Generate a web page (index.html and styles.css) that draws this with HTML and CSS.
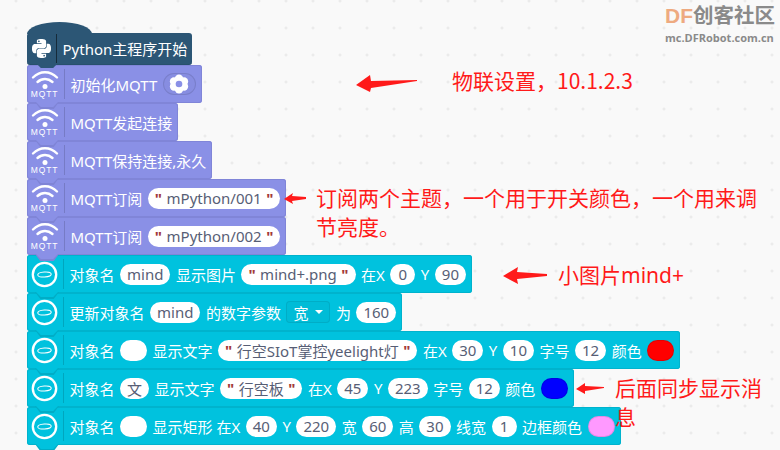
FILE: index.html

```html
<!DOCTYPE html>
<html lang="en">
<head>
  <meta charset="UTF-8" />
  <title>MQTT blocks</title>
  <link rel="stylesheet" href="styles.css">
</head>
<body>
  <svg class="defs" width="0" height="0">
    <symbol id="wifi" viewBox="0 0 28 20">
      <path d="M2 7.500C9 .5 19 .5 26 7.500" fill="none" stroke="#fff" stroke-width="2.400" stroke-linecap="round"/>
      <path d="M6.500 12C11 8 17 8 21.500 12" fill="none" stroke="#fff" stroke-width="2.400" stroke-linecap="round"/>
      <circle cx="14" cy="16.500" r="2.500" fill="#fff"/>
    </symbol>
    <symbol id="ring" viewBox="0 0 30 30">
      <circle cx="15" cy="15" r="13" fill="none" stroke="#fff" stroke-width="2.600"/>
      <ellipse cx="15" cy="15" rx="7.500" ry="2.800" fill="none" stroke="#fff" stroke-width="1.200" transform="rotate(-4 15 15)"/>
    </symbol>
  </svg>

  <div class="logo">
    <div class="logo-top"><span class="logo-df">DF</span>创客社区</div>
    <div class="logo-url">mc.DFRobot.com.cn</div>
  </div>

  <main class="stack">
    <div class="block hat">
      <span class="icon">
        <svg class="py" viewBox="0 0 24 24"><path fill="#fff" d="M14.250.180l.900.200.730.260.590.300.450.320.340.340.250.340.160.330.100.300.040.260.020.200-.010.130V8.500l-.050.630-.130.550-.210.460-.260.380-.300.310-.330.250-.350.190-.350.140-.330.100-.300.070-.260.040-.210.020H8.770l-.690.050-.590.140-.500.220-.410.270-.330.320-.270.350-.200.360-.150.370-.100.350-.070.320-.040.270-.020.210v3.060H3.170l-.210-.030-.280-.070-.320-.120-.350-.180-.360-.260-.360-.360-.350-.460-.320-.590-.280-.730-.210-.880-.140-1.050-.050-1.230.060-1.220.160-1.040.240-.870.320-.710.360-.570.400-.440.420-.330.420-.240.400-.160.360-.100.320-.050.240-.010h.160l.060.010h8.160v-.830H6.180l-.010-2.750-.020-.370.050-.340.110-.310.170-.280.250-.260.310-.230.380-.200.440-.180.510-.150.580-.120.640-.100.710-.060.770-.040.840-.020 1.270.050zm-6.300 1.980l-.230.330-.080.410.080.410.230.340.330.220.410.090.410-.090.330-.220.230-.340.080-.410-.080-.410-.230-.330-.330-.220-.410-.090-.410.090zm13.090 3.950l.280.060.320.120.350.180.360.270.360.350.350.470.320.590.280.730.210.880.140 1.040.050 1.230-.060 1.230-.160 1.040-.240.860-.320.710-.360.570-.400.450-.420.330-.420.240-.400.160-.360.090-.320.050-.240.020-.160-.010h-8.220v.820h5.840l.010 2.760.020.360-.050.340-.110.310-.170.290-.250.250-.310.240-.380.200-.440.170-.510.150-.580.130-.640.090-.710.070-.770.040-.840.010-1.270-.040-1.070-.140-.900-.200-.730-.250-.590-.300-.450-.330-.340-.340-.250-.340-.160-.330-.100-.300-.040-.250-.020-.200.010-.130v-5.340l.050-.640.130-.540.210-.460.260-.380.300-.320.330-.240.350-.200.350-.140.330-.100.300-.060.260-.040.210-.020.130-.010h5.840l.690-.050.590-.140.500-.210.410-.280.330-.320.270-.350.200-.360.150-.360.100-.350.070-.320.040-.280.020-.210V6.070h2.090l.140.010zm-6.470 14.250l-.230.330-.080.410.080.410.230.330.330.230.410.080.410-.080.330-.230.230-.33.080-.41-.08-.41-.23-.33-.33-.23-.41-.08-.41.08z"/></svg>
      </span>
      <span class="label">Python主程序开始</span>
    </div>

    <div class="block mqtt">
      <span class="icon"><svg class="wifi"><use href="#wifi"/></svg><span class="mqtt-tag">MQTT</span></span>
      <span class="label">初始化MQTT</span>
      <span class="field gear-field">
        <svg class="gear" viewBox="0 0 24 24">
          <g fill="#fff"><circle cx="12" cy="5.500" r="5"/><circle cx="12" cy="18.500" r="5"/><circle cx="6" cy="9" r="5"/><circle cx="18" cy="9" r="5"/><circle cx="6" cy="15" r="5"/><circle cx="18" cy="15" r="5"/></g>
          <circle cx="12" cy="12" r="4" fill="#8a90e6"/>
        </svg>
      </span>
    </div>
    <div class="block mqtt">
      <span class="icon"><svg class="wifi"><use href="#wifi"/></svg><span class="mqtt-tag">MQTT</span></span>
      <span class="label">MQTT发起连接</span>
    </div>
    <div class="block mqtt">
      <span class="icon"><svg class="wifi"><use href="#wifi"/></svg><span class="mqtt-tag">MQTT</span></span>
      <span class="label">MQTT保持连接,永久</span>
    </div>
    <div class="block mqtt">
      <span class="icon"><svg class="wifi"><use href="#wifi"/></svg><span class="mqtt-tag">MQTT</span></span>
      <span class="label">MQTT订阅</span>
      <span class="field"><b>"</b>mPython/001<b>"</b></span>
    </div>
    <div class="block mqtt">
      <span class="icon"><svg class="wifi"><use href="#wifi"/></svg><span class="mqtt-tag">MQTT</span></span>
      <span class="label">MQTT订阅</span>
      <span class="field"><b>"</b>mPython/002<b>"</b></span>
    </div>

    <div class="block oled">
      <span class="icon"><svg class="ring"><use href="#ring"/></svg></span>
      <span class="label">对象名</span>
      <span class="field">mind</span>
      <span class="label">显示图片</span>
      <span class="field"><b>"</b>mind+.png<b>"</b></span>
      <span class="label">在X</span>
      <span class="field">0</span>
      <span class="label">Y</span>
      <span class="field">90</span>
    </div>
    <div class="block oled">
      <span class="icon"><svg class="ring"><use href="#ring"/></svg></span>
      <span class="label">更新对象名</span>
      <span class="field">mind</span>
      <span class="label">的数字参数</span>
      <span class="select">宽<i class="caret"></i></span>
      <span class="label">为</span>
      <span class="field">160</span>
    </div>
    <div class="block oled">
      <span class="icon"><svg class="ring"><use href="#ring"/></svg></span>
      <span class="label">对象名</span>
      <span class="field blank"></span>
      <span class="label">显示文字</span>
      <span class="field"><b>"</b>行空SIoT掌控yeelight灯<b>"</b></span>
      <span class="label">在X</span>
      <span class="field">30</span>
      <span class="label">Y</span>
      <span class="field">10</span>
      <span class="label">字号</span>
      <span class="field">12</span>
      <span class="label">颜色</span>
      <span class="swatch red"></span>
    </div>
    <div class="block oled">
      <span class="icon"><svg class="ring"><use href="#ring"/></svg></span>
      <span class="label">对象名</span>
      <span class="field">文</span>
      <span class="label">显示文字</span>
      <span class="field"><b>"</b>行空板<b>"</b></span>
      <span class="label">在X</span>
      <span class="field">45</span>
      <span class="label">Y</span>
      <span class="field">223</span>
      <span class="label">字号</span>
      <span class="field">12</span>
      <span class="label">颜色</span>
      <span class="swatch blue"></span>
    </div>
    <div class="block oled">
      <span class="icon"><svg class="ring"><use href="#ring"/></svg></span>
      <span class="label">对象名</span>
      <span class="field blank"></span>
      <span class="label">显示矩形 在X</span>
      <span class="field">40</span>
      <span class="label">Y</span>
      <span class="field">220</span>
      <span class="label">宽</span>
      <span class="field">60</span>
      <span class="label">高</span>
      <span class="field">30</span>
      <span class="label">线宽</span>
      <span class="field">1</span>
      <span class="label">边框颜色</span>
      <span class="swatch pink"></span>
    </div>
  </main>

  <!-- red notes drawn on top of the screenshot -->
  <svg class="arrow arrow-1" viewBox="0 0 62 18"><polygon points="0,10 14,0 15,6 61,5 61,6 15,13 14,17"/></svg>
  <svg class="arrow arrow-2" viewBox="0 0 22 11"><polygon points="0,6 9,0 8,3 22,4 22,6 8,8 9,11"/></svg>
  <svg class="arrow arrow-3" viewBox="0 0 44 17"><polygon points="0,9 15,0 14,5 44,7 44,9 14,12 15,17"/></svg>
  <svg class="arrow arrow-4" viewBox="0 0 28 11"><polygon points="0,6 9,0 9,3 28,4 28,5 9,8 9,11"/></svg>

  <p class="note note-1">物联设置，10.1.2.3</p>
  <p class="note note-2">订阅两个主题，一个用于开关颜色，一个用来调节亮度。</p>
  <p class="note note-3">小图片mind+</p>
  <p class="note note-4">后面同步显示消息</p>
</body>
</html>
```

FILE: styles.css

```css
* {
  box-sizing: border-box;
}

body {
  margin: 0;
  width: 780px;
  height: 450px;
  overflow: hidden;
  position: relative;
  background-color: #f9f9f9;
  background-image: radial-gradient(circle, #e6e6e6 1px, transparent 1.2px);
  background-size: 27px 27px;
  background-position: 2.500px 14.500px;
  font-family: "Noto Sans", "Noto Sans CJK SC", sans-serif;
  color: #fff;
}

.defs {
  position: absolute;
}

.stack {
  display: flex;
  flex-direction: column;
  align-items: flex-start;
  padding: 33px 0 0 27px;
}

/* blocks */
.block {
  position: relative;
  display: flex;
  align-items: center;
  gap: 5.500px;
  height: 38px;
  padding: 0 6px 0 0;
  border-radius: 3px;
  font-size: 15px;
  white-space: nowrap;
}

.block::before,
.block::after {
  content: "";
  position: absolute;
  z-index: 1;
  clip-path: polygon(0 0, 100% 0, 78% 100%, 22% 100%);
}

.block::before {
  left: 8px;
  top: 100%;
  width: 24px;
  height: 7px;
  margin-top: -1px;
}

.block::after {
  left: 9px;
  top: 100%;
  width: 22px;
  height: 5px;
  margin-top: -1px;
}

.hat {
  height: 32px;
  padding-right: 5px;
  background: #2c5675;
  border-bottom: 1px solid #27506d;
}

.hat::before {
  left: 0;
  top: -11px;
  width: 65px;
  height: 12px;
  margin: 0;
  background: #2c5675;
  clip-path: none;
  border-radius: 50% 50% 0 0 / 100% 100% 0 0;
}

.hat::after {
  background: #2c5675;
}

.hat .icon {
  width: 30px;
  height: 30px;
  border-right-color: rgba(0, 0, 0, 0.5);
}

.mqtt {
  background: #8a90e6;
  box-shadow: inset 0 0 0 1px #8085d8;
}

.mqtt::before {
  background: #7f84d6;
}

.mqtt::after {
  background: #8a90e6;
}

.mqtt .icon {
  width: 38px;
}

.oled {
  background: #00c2de;
  box-shadow: inset 0 0 0 1px #00b3cd;
}

.oled::before {
  background: #00adc6;
}

.oled::after {
  background: #00c2de;
}

.icon {
  flex: none;
  position: relative;
  display: flex;
  flex-direction: column;
  align-items: center;
  justify-content: center;
  width: 37px;
  height: 30px;
  border-right: 1px solid rgba(0, 0, 0, 0.14);
}

.py {
  width: 19px;
  height: 21px;
  margin-right: 1px;
}

.wifi {
  width: 28px;
  height: 20px;
  margin-right: 2px;
}

.mqtt-tag {
  margin-right: 2px;
  font-family: "Liberation Sans", sans-serif;
  font-size: 8.500px;
  line-height: 9px;
  letter-spacing: 0.800px;
}

.ring {
  width: 27px;
  height: 27px;
  margin-right: 2px;
}

.field {
  display: flex;
  align-items: center;
  justify-content: center;
  gap: 4.500px;
  min-width: 25px;
  height: 21px;
  padding: 0 7px;
  border-radius: 11px;
  background: #fff;
  color: #575e75;
}

.field b {
  color: #a33a3a;
  font-weight: 700;
}

.blank {
  width: 27px;
}

.gear-field {
  width: 33px;
  height: 22px;
  padding: 0;
  background: rgba(0, 0, 0, 0.02);
  box-shadow: inset 0 0 0 1px rgba(0, 0, 0, 0.1);
}

.gear {
  width: 20px;
  height: 20px;
}

.select {
  display: flex;
  align-items: center;
  gap: 7px;
  height: 22px;
  padding: 0 7px;
  border-radius: 4px;
  background: #00bcd7;
  box-shadow: inset 0 0 0 1px #00adc6;
}

.caret {
  width: 0;
  height: 0;
  border-left: 4px solid transparent;
  border-right: 4px solid transparent;
  border-top: 4px solid #fff;
}

.swatch {
  width: 27px;
  height: 21px;
  border-radius: 11px;
  box-shadow: inset 0 0 0 1px rgba(0, 0, 0, 0.1);
}

.red {
  background: #ff0000;
}

.blue {
  background: #0000ff;
}

.pink {
  background: #ff99ff;
}

/* watermark */
.logo {
  position: absolute;
  top: 0;
  left: 665px;
  width: 114px;
  font-family: "Noto Sans CJK SC", sans-serif;
  font-weight: 700;
  color: #8a8a8a;
  white-space: nowrap;
}

.logo-top {
  font-size: 20.500px;
  line-height: 28px;
}

.logo-df {
  font-family: "Liberation Sans", sans-serif;
  font-size: 21px;
  color: #eeaa80;
}

.logo-url {
  font-family: "Open Sans", sans-serif;
  font-size: 11px;
  line-height: 16px;
}

/* notes */
.note {
  position: absolute;
  margin: 0;
  font-family: "Noto Sans CJK SC", sans-serif;
  color: #ff1a1a;
  font-size: 21px;
  line-height: 29px;
}

.note-1 {
  left: 452px;
  top: 66px;
}

.note-2 {
  left: 316px;
  top: 183px;
  width: 442px;
}

.note-3 {
  left: 558px;
  top: 261px;
  font-family: "Noto Sans", "Noto Sans CJK SC", sans-serif;
}

.note-4 {
  left: 615px;
  top: 373px;
  width: 150px;
}

.arrow {
  position: absolute;
  fill: #ff1a1a;
}

.arrow-1 {
  left: 356px;
  top: 75px;
  width: 62px;
  height: 18px;
}

.arrow-2 {
  left: 284px;
  top: 193px;
  width: 22px;
  height: 11px;
}

.arrow-3 {
  left: 503px;
  top: 267px;
  width: 44px;
  height: 17px;
}

.arrow-4 {
  left: 576px;
  top: 383px;
  width: 28px;
  height: 11px;
}
```
